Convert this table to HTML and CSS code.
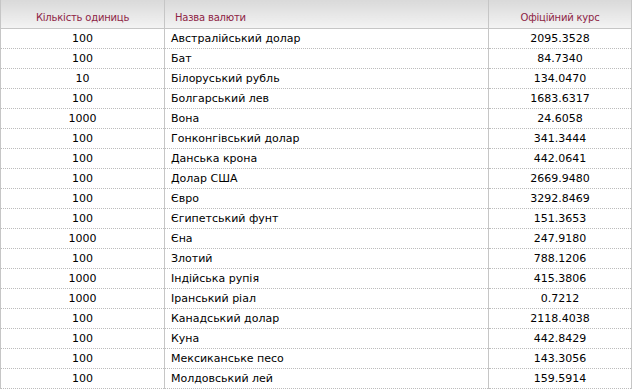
FILE: index.html
```html
<!DOCTYPE html>
<html lang="uk">
<head>
<meta charset="utf-8">
<title>Офіційний курс</title>
<link rel="stylesheet" href="styles.css">
</head>
<body>
<table class="rates">
  <thead>
    <tr>
      <th class="c-units">Кількість одиниць</th>
      <th class="c-name">Назва валюти</th>
      <th class="c-rate">Офіційний курс</th>
    </tr>
  </thead>
  <tbody>
    <tr><td class="c-units">100</td><td class="c-name">Австралійський долар</td><td class="c-rate">2095.3528</td></tr>
    <tr><td class="c-units">100</td><td class="c-name">Бат</td><td class="c-rate">84.7340</td></tr>
    <tr><td class="c-units">10</td><td class="c-name">Білоруський рубль</td><td class="c-rate">134.0470</td></tr>
    <tr><td class="c-units">100</td><td class="c-name">Болгарський лев</td><td class="c-rate">1683.6317</td></tr>
    <tr><td class="c-units">1000</td><td class="c-name">Вона</td><td class="c-rate">24.6058</td></tr>
    <tr><td class="c-units">100</td><td class="c-name">Гонконгівський долар</td><td class="c-rate">341.3444</td></tr>
    <tr><td class="c-units">100</td><td class="c-name">Данська крона</td><td class="c-rate">442.0641</td></tr>
    <tr><td class="c-units">100</td><td class="c-name">Долар США</td><td class="c-rate">2669.9480</td></tr>
    <tr><td class="c-units">100</td><td class="c-name">Євро</td><td class="c-rate">3292.8469</td></tr>
    <tr><td class="c-units">100</td><td class="c-name">Єгипетський фунт</td><td class="c-rate">151.3653</td></tr>
    <tr><td class="c-units">1000</td><td class="c-name">Єна</td><td class="c-rate">247.9180</td></tr>
    <tr><td class="c-units">100</td><td class="c-name">Злотий</td><td class="c-rate">788.1206</td></tr>
    <tr><td class="c-units">1000</td><td class="c-name">Індійська рупія</td><td class="c-rate">415.3806</td></tr>
    <tr><td class="c-units">1000</td><td class="c-name">Іранський ріал</td><td class="c-rate">0.7212</td></tr>
    <tr><td class="c-units">100</td><td class="c-name">Канадський долар</td><td class="c-rate">2118.4038</td></tr>
    <tr><td class="c-units">100</td><td class="c-name">Куна</td><td class="c-rate">442.8429</td></tr>
    <tr><td class="c-units">100</td><td class="c-name">Мексиканське песо</td><td class="c-rate">143.3056</td></tr>
    <tr><td class="c-units">100</td><td class="c-name">Молдовський лей</td><td class="c-rate">159.5914</td></tr>
  </tbody>
</table>
</body>
</html>
```
FILE: styles.css
```css
html, body {
  margin: 0;
  padding: 0;
  background: #ffffff;
  overflow: hidden;
}
.rates {
  width: 632px;
  border-collapse: collapse;
  table-layout: fixed;
  font-family: "DejaVu Sans", Verdana, sans-serif;
  font-size: 11px;
  color: #000000;
}
.rates th {
  height: 28px;
  padding: 0;
  font-weight: normal;
  font-size: 10px;
  letter-spacing: -0.2px;
  color: #8e2445;
  background: linear-gradient(to bottom, #d9d9d9 0%, #f3f3f3 100%);
  border-left: 1px solid #c6c6c6;
  border-bottom: 1px solid #c6c6c6;
  vertical-align: middle;
  padding-top: 7px;
  box-sizing: border-box;
}
.rates th:last-child {
  border-right: 1px solid #c6c6c6;
}
.rates td {
  height: 19px;
  padding: 0;
  border-left: 1px solid #c6c6c6;
  border-bottom: 1px dotted #bcbcbc;
  vertical-align: middle;
}
.rates td:last-child {
  border-right: 1px solid #c6c6c6;
}
.rates .c-units {
  width: 164px;
  text-align: center;
}
.rates .c-name {
  width: 324px;
  text-align: left;
  padding-left: 6px;
}
.rates th.c-name {
  padding-left: 10px;
}
.rates .c-rate {
  text-align: center;
}
```
